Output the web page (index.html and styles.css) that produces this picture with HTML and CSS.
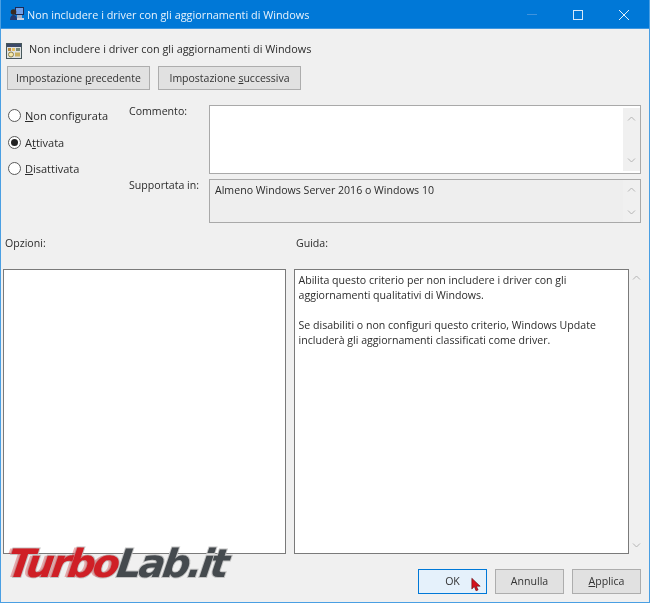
FILE: index.html
```html
<!DOCTYPE html>
<html lang="it">
<head>
<meta charset="utf-8">
<title>Non includere i driver con gli aggiornamenti di Windows</title>
<link rel="stylesheet" href="styles.css">
</head>
<body>
<div class="window">
  <div class="titlebar">
    <svg class="title-icon" width="16" height="16" viewBox="0 0 16 16">
      <rect x="6" y="1" width="9" height="8" fill="#1c2a55"/>
      <rect x="7" y="2" width="7" height="6" fill="#6f9fe8"/>
      <rect x="8" y="9" width="5" height="3" fill="#9fb0c8"/>
      <circle cx="4.500" cy="6" r="2.800" fill="#3a2a20"/>
      <path d="M1 14c0-3.500 1.500-5 3.500-5S8 10.500 8 14z" fill="#23386e"/>
      <rect x="8" y="12" width="7" height="2" fill="#c6cede"/>
    </svg>
    <span class="title-text">Non includere i driver con gli aggiornamenti di Windows</span>
    <div class="win-controls">
      <svg width="46" height="29" viewBox="0 0 46 29"><path d="M18 14.500h10" stroke="#3f93dd" fill="none"/></svg>
      <svg width="46" height="29" viewBox="0 0 46 29"><rect x="18.500" y="10.500" width="9" height="9" stroke="#d6e8f8" fill="none"/></svg>
      <svg width="46" height="29" viewBox="0 0 46 29"><path d="M18 10l10 10M28 10L18 20" stroke="#e4f0fa" fill="none"/></svg>
    </div>
  </div>
  <div class="content">
    <div class="policy-head">
      <svg class="policy-icon" width="16" height="16" viewBox="0 0 16 16">
        <rect x="0.500" y="0.500" width="15" height="15" fill="#dfe3e3" stroke="#48585c"/>
        <rect x="1" y="1" width="14" height="3" fill="#3c4a68"/>
        <rect x="2" y="5" width="3" height="3" fill="#b98a3c"/>
        <rect x="6" y="5" width="3" height="3" fill="#e8c060"/>
        <rect x="10" y="5" width="4" height="3" fill="#7a8a78"/>
        <circle cx="5" cy="11.500" r="2.500" fill="#f6e8a8" stroke="#8a8050"/>
        <rect x="9" y="9.500" width="5" height="4" fill="#c8b060"/>
      </svg>
      <span>Non includere i driver con gli aggiornamenti di Windows</span>
    </div>
    <div class="nav-buttons">
      <button class="btn btn-nav">Impostazione <u>p</u>recedente</button>
      <button class="btn btn-nav">Impostazione <u>s</u>uccessiva</button>
    </div>
    <div class="settings">
      <div class="radios">
        <div class="radio-row"><span class="radio"></span><span><u>N</u>on configurata</span></div>
        <div class="radio-row"><span class="radio radio-on"></span><span>A<u>t</u>tivata</span></div>
        <div class="radio-row"><span class="radio"></span><span><u>D</u>isattivata</span></div>
      </div>
      <div class="fields">
        <div class="field-label label-comment">Commento:</div>
        <div class="box box-comment">
          <div class="scroll scroll-comment">
            <svg class="chev" width="9" height="5" viewBox="0 0 9 5"><path d="M1 4.500l3.500-3.500 3.500 3.500"/></svg>
            <svg class="chev" width="9" height="5" viewBox="0 0 9 5"><path d="M1 .5l3.500 3.500 3.500-3.500"/></svg>
          </div>
        </div>
        <div class="field-label label-support">Supportata in:</div>
        <div class="box box-support">
          <span class="support-text">Almeno Windows Server 2016 o Windows 10</span>
          <div class="scroll scroll-support">
            <svg class="chev" width="9" height="5" viewBox="0 0 9 5"><path d="M1 4.500l3.500-3.500 3.500 3.500"/></svg>
            <svg class="chev" width="9" height="5" viewBox="0 0 9 5"><path d="M1 .5l3.500 3.500 3.500-3.500"/></svg>
          </div>
        </div>
      </div>
    </div>
    <div class="panes">
      <div class="pane-left">
        <div class="pane-label">Opzioni:</div>
        <div class="pane-box"></div>
      </div>
      <div class="pane-right">
        <div class="pane-label">Guida:</div>
        <div class="guide-wrap">
          <div class="pane-box guide-box">
            <p>Abilita questo criterio per non includere i driver con gli aggiornamenti qualitativi di Windows.</p>
            <p>Se disabiliti o non configuri questo criterio, Windows Update includerà gli aggiornamenti classificati come driver.</p>
          </div>
          <div class="guide-scroll">
            <svg class="chev" width="9" height="5" viewBox="0 0 9 5"><path d="M1 4.500l3.500-3.500 3.500 3.500"/></svg>
            <svg class="chev" width="9" height="5" viewBox="0 0 9 5"><path d="M1 .5l3.500 3.500 3.500-3.500"/></svg>
          </div>
        </div>
      </div>
    </div>
    <div class="actions">
      <button class="btn btn-action btn-default">OK</button>
      <button class="btn btn-action">Annulla</button>
      <button class="btn btn-action"><u>A</u>pplica</button>
    </div>
  </div>
  <svg class="cursor" width="10" height="15" viewBox="0 0 12 17">
    <path d="M1 1v13l3-3 2 5 2.500-1-2-4.500H11z" fill="#d4101c" stroke="#5a0a10" stroke-width=".7"/>
  </svg>
  <div class="logo"><span class="logo-red">Turbo</span><span class="logo-dark">Lab.it</span></div>
</div>
</body>
</html>
```

FILE: styles.css
```css
* { box-sizing: border-box; }
html, body { margin: 0; padding: 0; }
body { width: 650px; height: 603px; overflow: hidden; background: #f0f0f0; }
.window {
  position: relative;
  width: 650px;
  height: 603px;
  display: flex;
  flex-direction: column;
  background: #f0f0f0;
  border: 1px solid #4a9fe3;
  border-top: 0;
  font-family: "Open Sans", "Noto Sans", sans-serif;
  font-size: 10.600px;
  color: #2b2b2b;
  overflow: hidden;
  filter: blur(0.35px);
}
.titlebar {
  height: 29px;
  flex: none;
  display: flex;
  align-items: center;
  background: #0078d7;
  color: #e8f3fc;
  font-size: 10.850px;
  padding-left: 8px;
  border-bottom: 1px solid #3f97e0;
}
.title-icon { flex: none; margin-right: 2px; }
.title-text { white-space: nowrap; }
.win-controls { margin-left: auto; display: flex; margin-right: 2px; }
.win-controls svg { display: block; }
.content { flex: 1; display: flex; flex-direction: column; padding-left: 2px; }
.policy-head {
  height: 20px;
  margin-top: 9px;
  display: flex;
  align-items: center;
  gap: 7px;
  padding-left: 3px;
  white-space: nowrap;
  font-size: 10.850px;
}
.policy-icon { flex: none; margin-top: 5px; }
.nav-buttons { display: flex; gap: 8px; margin-top: 8px; padding-left: 4px; }
.btn {
  font: inherit;
  color: #333;
  background: #e1e1e1;
  border: 1px solid #adadad;
  padding: 0 0 2px;
  margin: 0;
}
.btn-nav { width: 143px; height: 24px; font-size: 10.500px; padding: 0; }
.settings { display: flex; margin-top: 15px; }
.radios {
  width: 126px;
  flex: none;
  display: flex;
  flex-direction: column;
  padding-left: 5px;
  margin-top: -2.500px;
  font-size: 11px;
}
.radio-row { height: 26.500px; display: flex; align-items: center; gap: 4px; white-space: nowrap; }
.radio {
  width: 13px;
  height: 13px;
  border-radius: 50%;
  background: #fff;
  border: 1px solid #5a5a5a;
  flex: none;
}
.radio-on::after {
  content: "";
  display: block;
  width: 7px;
  height: 7px;
  margin: 2px;
  border-radius: 50%;
  background: #222;
}
.fields {
  display: grid;
  grid-template-columns: 80px 432px;
  grid-template-rows: 69px 44px;
  row-gap: 5px;
}
.field-label { white-space: nowrap; line-height: 14px; }
.label-comment { margin-top: -1px; }
.label-support { margin-top: -1px; }
.box { border: 1px solid #a9a9a9; display: flex; }
.box-comment { background: #fff; }
.box-support { background: #eeeeee; }
.support-text { padding: 3px 0 0 5px; flex: 1; white-space: nowrap; }
.scroll {
  width: 17px;
  flex: none;
  margin-left: auto;
  background: #f0f0f0;
  display: flex;
  flex-direction: column;
  justify-content: space-between;
  align-items: center;
}
.scroll-comment { margin: 2px 0 2px auto; padding: 8px 0; }
.scroll-support { padding: 7px 0; }
.chev { display: block; fill: none; stroke: #b4b4b4; stroke-width: 1; }
.panes { display: flex; gap: 8px; margin-top: 12px; }
.pane-left { width: 283px; flex: none; display: flex; flex-direction: column; }
.pane-right { flex: 1; display: flex; flex-direction: column; min-width: 0; }
.pane-label { height: 34px; padding: 1px 0 0 2px; flex: none; }
.pane-box { height: 285px; background: #fff; border: 1px solid #7a7a7a; }
.guide-wrap { display: flex; }
.guide-box { width: 335px; flex: none; padding: 3px 3.500px; line-height: 15px; }
.guide-box p { margin: 0 0 15px; }
.guide-scroll {
  width: 15px;
  height: 285px;
  display: flex;
  flex-direction: column;
  justify-content: space-between;
  align-items: center;
  padding: 6px 0;
}
.actions { display: flex; justify-content: flex-end; gap: 8px; margin-top: 15px; padding-right: 8px; }
.btn-action { width: 69px; height: 25px; }
.btn-default { background: #e5f1fb; border: 1px solid #0078d7; }
.cursor { position: absolute; left: 470px; top: 577px; }
.logo {
  position: absolute;
  left: 7px;
  top: 542px;
  font-family: "DejaVu Sans", sans-serif;
  font-weight: 700;
  font-style: italic;
  font-size: 39px;
  line-height: 44px;
  letter-spacing: -2.800px;
  white-space: nowrap;
  -webkit-text-stroke: 2px #c4c4c4;
  paint-order: stroke fill;
  transform: skewX(-8deg);
}
.logo-red { color: #cf1f26; text-shadow: -3px 0 0 rgba(207, 31, 38, .35); }
.logo-dark { color: #454a4e; }
```
